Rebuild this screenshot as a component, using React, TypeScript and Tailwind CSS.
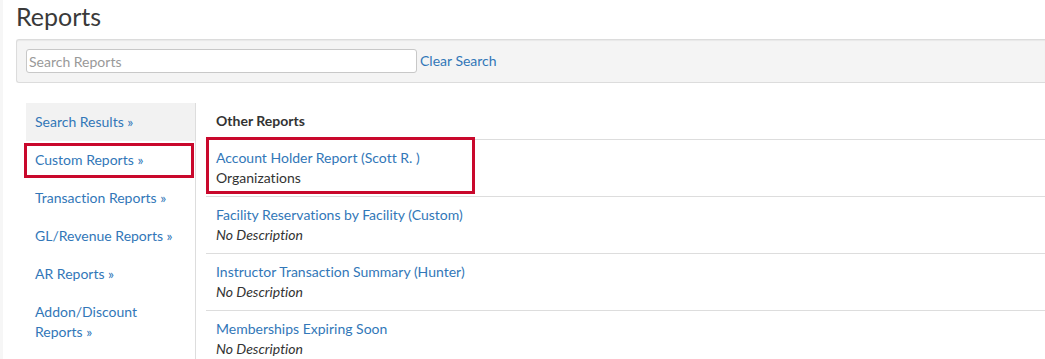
const NAV = [
  { label: 'Search Results', active: true },
  { label: 'Custom Reports', marked: true },
  { label: 'Transaction Reports' },
  { label: 'GL/Revenue Reports' },
  { label: 'AR Reports' },
  { label: 'Addon/Discount Reports' },
];

const REPORTS = [
  { title: 'Account Holder Report (Scott R. )', desc: 'Organizations', marked: true },
  { title: 'Facility Reservations by Facility (Custom)', desc: null },
  { title: 'Instructor Transaction Summary (Hunter)', desc: null },
  { title: 'Memberships Expiring Soon', desc: null },
];

function Annotation({ className }: { className: string }) {
  return <span className={`pointer-events-none absolute border-[3px] border-[#c9082c] ${className}`} />;
}

export default function App() {
  return (
    <div className="h-[359px] w-full overflow-hidden border-l-[3px] border-l-[#f6f6f6] bg-white pl-[13px] font-['Lato','Liberation_Sans',sans-serif] text-[14px] text-[#333] [font-variant-ligatures:none]">
      <h1 className="pt-[2px] pb-[8px] text-[25px] leading-[29px] font-normal text-[#3a3a3a]">Reports</h1>

      {/* Search bar */}
      <div className="flex items-center rounded-l-[3px] border border-r-0 border-[#dcdcdc] bg-[#f4f4f4] py-[9px] pl-[9px] shadow-[inset_0_1px_1px_rgba(0,0,0,0.05)]">
        <input
          type="text"
          placeholder="Search Reports"
          className="h-[24px] w-[391px] rounded-[3px] border border-[#c8c8c8] bg-white px-[2px] text-[14px] text-[#333] placeholder:text-[#999] focus:outline-none"
        />
        <a className="ml-[3px] leading-[20px] text-[#3277b8]">Clear Search</a>
      </div>

      <div className="mt-[20px] flex">
        {/* Category list */}
        <div className="ml-[10px] w-[170px] shrink-0 border-r border-[#dddddd]">
          {NAV.map((n) => (
            <div
              key={n.label}
              className={`relative py-[9px] pr-[20px] pl-[9px] leading-[20px] text-[#3277b8] ${n.active ? 'bg-[#f2f2f2]' : ''}`}
            >
              {`${n.label} »`}
              {n.marked && <Annotation className="top-[2px] right-[1px] bottom-[1px] left-[-2px]" />}
            </div>
          ))}
        </div>

        {/* Report list */}
        <div className="ml-[10px] flex-1">
          <div className="border-b border-[#dddddd] px-[10px] py-[8px] leading-[20px] font-bold">Other Reports</div>
          {REPORTS.map((r) => (
            <div key={r.title} className="relative border-b border-[#dddddd] px-[10px] py-[8px] leading-[20px]">
              <div className="text-[#3277b8]">{r.title}</div>
              <div className={r.desc ? '' : 'italic'}>{r.desc ?? 'No Description'}</div>
              {r.marked && <Annotation className="top-[-3px] bottom-[2px] left-0 w-[269px]" />}
            </div>
          ))}
        </div>
      </div>
    </div>
  );
}
